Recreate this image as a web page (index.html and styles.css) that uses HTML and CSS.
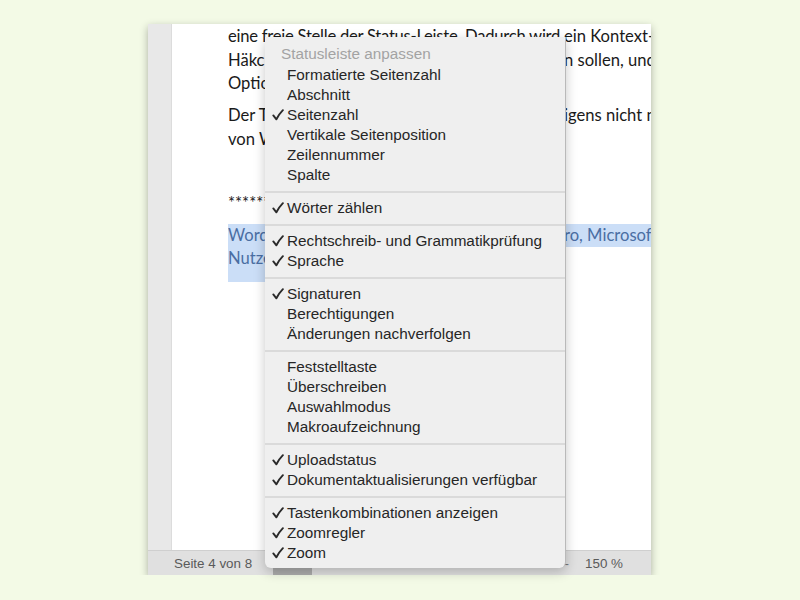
FILE: index.html
```html
<!DOCTYPE html>
<html lang="de">
<head>
    <meta charset="UTF-8">
    <meta name="viewport" content="width=device-width, initial-scale=1.0">
    <title>Statusleiste anpassen</title>
    <link rel="stylesheet" href="styles.css">
</head>
<body>
    <div class="window">
        <div class="main">
            <div class="gutter"></div>
            <div class="page">
                <p>
                    <span class="line"><span class="cut tight">eine freie Stelle der Status-Leiste. Dadurch wird</span>ein Kontext-Menü angezeigt.</span>
                    <span class="line"><span class="cut">Häkchen bei allen Informationen, die angezeigt werde</span>n sollen, und entfernen</span>
                    <span class="line">Optionen, die Sie nicht brauchen.</span>
                </p>
                <p>
                    <span class="line"><span class="cut">Der Trick funktioniert übr</span>igens nicht nur in Word</span>
                    <span class="line">von Word 2016 für Mac.</span>
                </p>
                <p><span class="line">&nbsp;</span></p>
                <p><span class="line">**************</span></p>
                <p class="sel">
                    <span class="line hl"><span class="cut">Word, Office 2016, Mac, Windows 10 P</span>ro, Microsoft Office</span>
                    <span class="line"><span class="hl tail">Nutzer, Tipps</span></span>
                </p>
            </div>
        </div>
        <div class="status">
            <span class="pages">Seite 4 von 8</span>
            <span class="view-btn"></span>
            <span class="zoom-minus">-</span>
            <span class="zoom">150 %</span>
        </div>
    </div>

    <!-- Kontextmenü der Statusleiste -->
    <ul class="menu">
        <li class="title">Statusleiste anpassen</li>
        <li class="item">Formatierte Seitenzahl</li>
        <li class="item">Abschnitt</li>
        <li class="item"><svg class="chk" viewBox="0 0 12 12"><path d="M1.3 6.4 L4.4 10.3 Q7 5.2 10.9 1.2"/></svg>Seitenzahl</li>
        <li class="item">Vertikale Seitenposition</li>
        <li class="item">Zeilennummer</li>
        <li class="item">Spalte</li>
        <li class="sep"></li>
        <li class="item"><svg class="chk" viewBox="0 0 12 12"><path d="M1.3 6.4 L4.4 10.3 Q7 5.2 10.9 1.2"/></svg>Wörter zählen</li>
        <li class="sep"></li>
        <li class="item"><svg class="chk" viewBox="0 0 12 12"><path d="M1.3 6.4 L4.4 10.3 Q7 5.2 10.9 1.2"/></svg>Rechtschreib- und Grammatikprüfung</li>
        <li class="item"><svg class="chk" viewBox="0 0 12 12"><path d="M1.3 6.4 L4.4 10.3 Q7 5.2 10.9 1.2"/></svg>Sprache</li>
        <li class="sep"></li>
        <li class="item"><svg class="chk" viewBox="0 0 12 12"><path d="M1.3 6.4 L4.4 10.3 Q7 5.2 10.9 1.2"/></svg>Signaturen</li>
        <li class="item">Berechtigungen</li>
        <li class="item">Änderungen nachverfolgen</li>
        <li class="sep"></li>
        <li class="item">Feststelltaste</li>
        <li class="item">Überschreiben</li>
        <li class="item">Auswahlmodus</li>
        <li class="item">Makroaufzeichnung</li>
        <li class="sep"></li>
        <li class="item"><svg class="chk" viewBox="0 0 12 12"><path d="M1.3 6.4 L4.4 10.3 Q7 5.2 10.9 1.2"/></svg>Uploadstatus</li>
        <li class="item"><svg class="chk" viewBox="0 0 12 12"><path d="M1.3 6.4 L4.4 10.3 Q7 5.2 10.9 1.2"/></svg>Dokumentaktualisierungen verfügbar</li>
        <li class="sep"></li>
        <li class="item"><svg class="chk" viewBox="0 0 12 12"><path d="M1.3 6.4 L4.4 10.3 Q7 5.2 10.9 1.2"/></svg>Tastenkombinationen anzeigen</li>
        <li class="item"><svg class="chk" viewBox="0 0 12 12"><path d="M1.3 6.4 L4.4 10.3 Q7 5.2 10.9 1.2"/></svg>Zoomregler</li>
        <li class="item"><svg class="chk" viewBox="0 0 12 12"><path d="M1.3 6.4 L4.4 10.3 Q7 5.2 10.9 1.2"/></svg>Zoom</li>
    </ul>
</body>
</html>
```

FILE: styles.css
```css
body {
    margin: 0;
    background: #f3fae6;
    font-family: "Liberation Sans", Arial, sans-serif;
}

.window {
    position: relative;
    margin: 24px 0 0 148px;
    width: 503px;
    height: 551px;
    display: flex;
    flex-direction: column;
    box-shadow: 0 3px 8px rgba(0, 0, 0, 0.3);
}

.main {
    flex: 1;
    display: flex;
    overflow: hidden;
}

.gutter {
    width: 23px;
    background: #e8e8e8;
    border-right: 1px solid #dcdcdc;
}

.page {
    flex: 1;
    background: #fff;
    padding: 1px 0 0 56px;
    overflow: hidden;
    font-family: Lato, "Open Sans", sans-serif;
    font-size: 16.6px;
    line-height: 23.5px;
    color: #1a1a1a;
}

.page p {
    margin: 0 0 8.5px;
}

.line {
    display: block;
    white-space: nowrap;
}

.cut {
    display: inline-block;
    width: 336px;
    overflow: hidden;
    vertical-align: top;
}

.tight {
    letter-spacing: -0.25px;
}

.sel {
    margin-top: 17px;
}

.hl {
    background: #cbdef7;
    color: #4a6ea3;
}

.tail {
    display: inline-block;
    width: 120px;
    padding-bottom: 11px;
}

.status {
    height: 24px;
    background: #e0e0e0;
    border-top: 1px solid #cfcfcf;
    display: flex;
    align-items: center;
    padding: 0 28px 0 26px;
    font-size: 13.4px;
    color: #5a5a5a;
}

.view-btn {
    width: 39px;
    height: 24px;
    margin-left: 21px;
    background: #acacac;
}

.zoom-minus {
    margin-left: auto;
    margin-right: 16px;
    color: #777;
}

/* Kontextmenü */
.menu {
    position: absolute;
    left: 265px;
    top: 37px;
    width: 300px;
    margin: 0;
    padding: 6px 0 5px;
    list-style: none;
    background: #efefef;
    border-right: 1px solid #b9b9b9;
    border-radius: 0 0 6px 6px;
    box-shadow: 0 4px 12px rgba(0, 0, 0, 0.22);
    font-size: 15.3px;
    color: #262626;
}

.menu .title {
    height: 22px;
    line-height: 22px;
    padding-left: 16px;
    color: #a3a3a3;
}

.menu .item {
    position: relative;
    height: 20px;
    line-height: 20px;
    padding-left: 22px;
    white-space: nowrap;
}

.menu .chk {
    position: absolute;
    left: 7px;
    top: 4px;
    width: 12px;
    height: 12px;
    fill: none;
    stroke: #2a2a2a;
    stroke-width: 1.9;
    stroke-linecap: round;
    stroke-linejoin: round;
}

.menu .sep {
    position: relative;
    height: 13px;
}

.menu .sep::after {
    content: "";
    position: absolute;
    left: 0;
    right: 0;
    top: 6px;
    height: 2px;
    background: #dadada;
}
```
